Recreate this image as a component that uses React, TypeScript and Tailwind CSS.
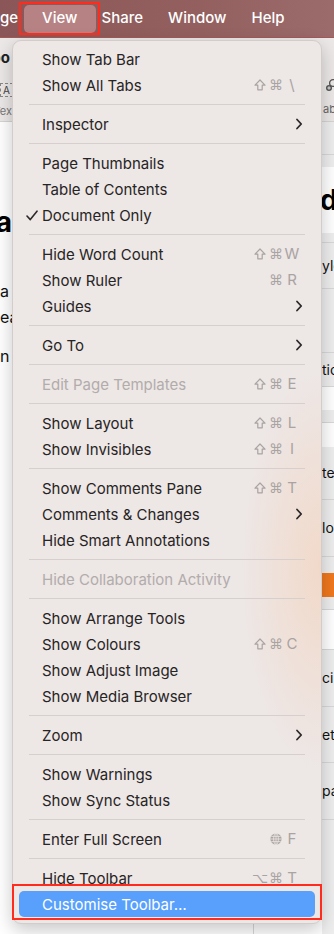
import React from "react";

type Item = {
  label: string;
  keys?: string[];
  chevron?: boolean;
  disabled?: boolean;
  checked?: boolean;
  active?: boolean;
};

const SEP = "sep" as const;

const menu: Array<Item | typeof SEP> = [
  { label: "Show Tab Bar" },
  { label: "Show All Tabs", keys: ["⇧", "⌘", "\\"] },
  SEP,
  { label: "Inspector", chevron: true },
  SEP,
  { label: "Page Thumbnails" },
  { label: "Table of Contents" },
  { label: "Document Only", checked: true },
  SEP,
  { label: "Hide Word Count", keys: ["⇧", "⌘", "W"] },
  { label: "Show Ruler", keys: ["⌘", "R"] },
  { label: "Guides", chevron: true },
  SEP,
  { label: "Go To", chevron: true },
  SEP,
  { label: "Edit Page Templates", keys: ["⇧", "⌘", "E"], disabled: true },
  SEP,
  { label: "Show Layout", keys: ["⇧", "⌘", "L"] },
  { label: "Show Invisibles", keys: ["⇧", "⌘", "I"] },
  SEP,
  { label: "Show Comments Pane", keys: ["⇧", "⌘", "T"] },
  { label: "Comments & Changes", chevron: true },
  { label: "Hide Smart Annotations" },
  SEP,
  { label: "Hide Collaboration Activity", disabled: true },
  SEP,
  { label: "Show Arrange Tools" },
  { label: "Show Colours", keys: ["⇧", "⌘", "C"] },
  { label: "Show Adjust Image" },
  { label: "Show Media Browser" },
  SEP,
  { label: "Zoom", chevron: true },
  SEP,
  { label: "Show Warnings" },
  { label: "Show Sync Status" },
  SEP,
  { label: "Enter Full Screen", keys: ["globe", "F"] },
  SEP,
  { label: "Hide Toolbar", keys: ["⌥", "⌘", "T"] },
  { label: "Customise Toolbar…", active: true },
];

const Globe = () => (
  <svg width="12" height="12" viewBox="0 0 12 12">
    <circle cx="6" cy="6" r="5.6" fill="#aaa4a3" />
    <g stroke="#ece6e5" strokeWidth="0.8" fill="none">
      <ellipse cx="6" cy="6" rx="2.4" ry="5.6" />
      <line x1="6" y1="0.4" x2="6" y2="11.6" />
      <line x1="0.4" y1="6" x2="11.6" y2="6" />
      <path d="M1.3 3.4 H10.7 M1.3 8.6 H10.7" />
    </g>
  </svg>
);

const Shift = () => (
  <svg width="12" height="12" viewBox="0 0 12 12">
    <path
      d="M6 1 L11 6.2 H8.2 V10.8 H3.8 V6.2 H1 Z"
      stroke="#a9a3a2"
      strokeWidth="1.2"
      strokeLinejoin="round"
      fill="none"
    />
  </svg>
);

const Keys = ({ keys }: { keys: string[] }) => (
  <div className="flex items-center text-[#a9a3a2]">
    {keys.map((k, i) => {
      if (k === "⇧")
        return (
          <span key={i} className="w-[16px] flex justify-center">
            <Shift />
          </span>
        );
      if (k === "globe")
        return (
          <span key={i} className="w-[16px] flex justify-center">
            <Globe />
          </span>
        );
      const mod = k === "⌘" || k === "⌥";
      return (
        <span
          key={i}
          className={
            mod
              ? "w-[16px] text-center text-[14px] [font-family:'DejaVu_Sans',sans-serif]"
              : "w-[16px] flex justify-center text-[15px]"
          }
        >
          {k}
        </span>
      );
    })}
  </div>
);

const Row = ({ item }: { item: Item }) => {
  const color = item.active
    ? "bg-[#58a0fb] text-white"
    : item.disabled
    ? "text-[#b2acab]"
    : "text-[#272424]";
  return (
    <div className={`mx-[6px] h-[26px] rounded-[5px] flex items-center pl-[7px] pr-[15px] ${color}`}>
      <span className="w-[16px] flex items-center">
        {item.checked && (
          <svg width="12" height="11" viewBox="0 0 12 11">
            <path d="M1 6 L4.3 9.6 L11 1.2" stroke="#2d2a2a" strokeWidth="1.6" fill="none" strokeLinecap="round" strokeLinejoin="round" />
          </svg>
        )}
      </span>
      <span className="flex-1 text-[15px] leading-none">{item.label}</span>
      {item.keys && <Keys keys={item.keys} />}
      {item.chevron && (
        <svg width="8" height="12" viewBox="0 0 8 12" className="-mr-[3px]">
          <path d="M2 1.5 L6.2 6 L2 10.5" stroke="#2b2828" strokeWidth="1.8" fill="none" strokeLinecap="round" strokeLinejoin="round" />
        </svg>
      )}
    </div>
  );
};

export default function App() {
  return (
    <div className="relative w-[334px] h-[934px] overflow-hidden bg-white [font-family:Inter,'Liberation_Sans',sans-serif]">
      {/* menu bar */}
      <div className="h-[38px] flex items-center bg-[linear-gradient(90deg,#8b5657,#93605f_60%,#9b6b6b)] text-white text-[15px] font-medium border-b border-[#a25a58]">
        <span>ge</span>
        <span className="ml-[6px] px-[18px] h-[28px] flex items-center rounded-[5px] bg-[#b78283]">View</span>
        <span className="ml-[6px]">Share</span>
        <span className="ml-[25px]">Window</span>
        <span className="ml-[25px]">Help</span>
      </div>

      {/* window content behind the menu */}
      <div className="flex h-[896px]">
        <div className="w-[12px] flex flex-col overflow-hidden">
          <div className="h-[84px] bg-[#ebe8e7] border-b border-[#d6d3d3] flex flex-col">
            <div className="h-[12px]" />
            <div className="flex justify-end text-[15px] font-bold text-[#222] leading-none pr-[2px]">Zoo</div>
            <div className="h-[18px]" />
            <div className="flex justify-end">
              <span className="border border-dashed border-[#888] text-[10px] leading-[12px] px-[2px] text-[#444] -mr-[1px]">A</span>
            </div>
            <div className="h-[9px]" />
            <div className="flex justify-end text-[11px] text-[#777] leading-none">Tex</div>
          </div>
          <div className="flex-1 bg-white flex flex-col">
            <div className="h-[86px]" />
            <div className="flex justify-end text-[28px] font-bold text-black leading-none">Tila</div>
            <div className="h-[42px]" />
            <div className="text-[16px] text-[#111] leading-[26px]">a</div>
            <div className="text-[16px] text-[#111] leading-[26px]">ea</div>
            <div className="h-[13px]" />
            <div className="text-[16px] text-[#111] leading-[26px]">n</div>
          </div>
        </div>

        <div className="flex-1 flex flex-col bg-white">
          <div className="h-[84px] bg-[#ebe8e7] border-b border-[#d6d3d3]" />
          <div className="flex-1" />
          <div className="h-[14px] ml-[241px] border-l border-[#d8d8d8]" />
        </div>

        <div className="w-[12px] flex flex-col overflow-hidden bg-[#eeeeee] text-[14px] text-[#111] leading-none">
          <div className="h-[84px] bg-[#ebe8e7] border-b border-[#d6d3d3] flex flex-col">
            <div className="h-[40px]" />
            <svg width="14" height="14" viewBox="0 0 14 14" className="ml-[3px]">
              <circle cx="8" cy="5" r="3.4" stroke="#555" strokeWidth="1.3" fill="none" />
              <circle cx="4" cy="10" r="3" fill="#555" />
              <path d="M4 8.3 V11.7 M2.3 10 H5.7" stroke="#eee" strokeWidth="1" />
            </svg>
            <div className="h-[12px]" />
            <div className="text-[11px] text-[#666] pl-[1px] whitespace-nowrap">abo</div>
          </div>
          <div className="h-[33px] border-b border-[#d8d8d8]" />
          <div className="h-[12px]" />
          <div className="h-[66px] bg-white flex items-center">
            <span className="text-[28px] font-bold text-black -ml-[2px]">dy</span>
          </div>
          <div className="h-[10px] border-b border-[#d8d8d8]" />
          <div className="h-[46px] border-b border-[#d8d8d8] flex items-center whitespace-nowrap">yle</div>
          <div className="h-[64px] border-b border-[#d8d8d8]" />
          <div className="h-[34px] border-b border-[#d8d8d8] flex items-center whitespace-nowrap">tio</div>
          <div className="h-[23px] bg-white" />
          <div className="h-[13px] border-b border-[#d8d8d8]" />
          <div className="h-[24px] bg-white" />
          <div className="h-[53px] border-b border-[#d8d8d8] flex items-center whitespace-nowrap">tex</div>
          <div className="h-[57px] border-b border-[#d8d8d8] flex items-center whitespace-nowrap">lou</div>
          <div className="h-[16px]" />
          <div className="h-[24px] bg-[#f0781d]" />
          <div className="h-[13px] border-b border-[#d8d8d8]" />
          <div className="h-[40px] bg-white border-b border-[#d8d8d8]" />
          <div className="h-[57px] border-b border-[#d8d8d8] flex items-center whitespace-nowrap">cin</div>
          <div className="h-[56px] border-b border-[#d8d8d8] flex items-center whitespace-nowrap">ets</div>
          <div className="h-[57px] border-b border-[#d8d8d8] flex items-center whitespace-nowrap">pa</div>
        </div>
      </div>

      {/* dropdown menu */}
      <div className="absolute left-[12px] top-[40px] w-[310px] pt-[5px] pb-[6px] rounded-[9px] border border-[#d3cccb] bg-[#ede7e6] bg-[radial-gradient(ellipse_80px_200px_at_100%_60%,rgba(248,196,158,0.4),rgba(248,196,158,0))] shadow-[0_6px_18px_rgba(0,0,0,0.22)]">
        {menu.map((m, i) =>
          m === SEP ? (
            <div key={i} className="h-[13px] flex items-center px-[16px]">
              <div className="h-px flex-1 bg-[#d6cfce]" />
            </div>
          ) : (
            <Row key={i} item={m} />
          )
        )}
      </div>

      {/* annotation outlines */}
      <div className="absolute left-[19px] top-[2px] w-[81px] h-[33px] border-2 border-[#ff2b1c]" />
      <div className="absolute left-[12px] top-[884px] w-[310px] h-[36px] border-2 border-[#ff2b1c]" />
    </div>
  );
}
